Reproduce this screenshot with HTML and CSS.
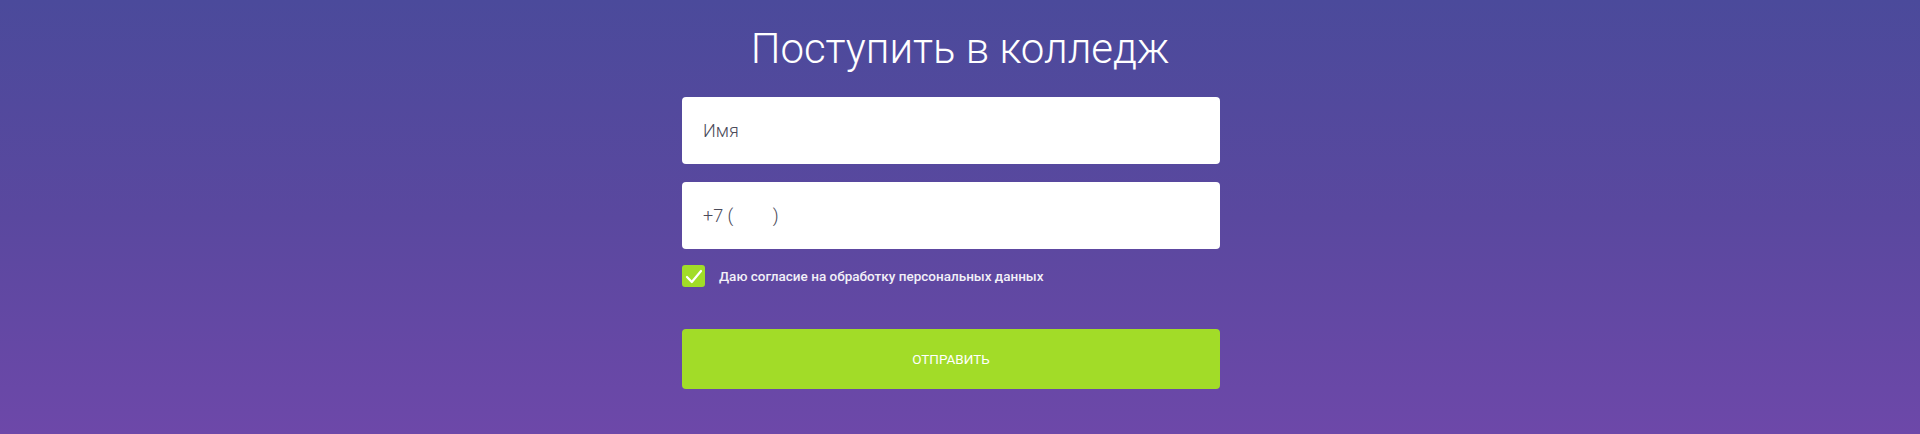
FILE: index.html
```html
<!DOCTYPE html>
<html lang="ru">
<head>
    <meta charset="UTF-8">
    <meta name="viewport" content="width=device-width, initial-scale=1.0">
    <title>Поступить в колледж</title>
    <link rel="stylesheet" href="styles.css">
</head>
<body>
    <section class="apply">
        <h1 class="apply-title">Поступить в колледж</h1>

        <form class="apply-form" onsubmit="return false">
            <input class="field" type="text" name="name" placeholder="Имя">
            <input class="field field-phone" type="tel" name="phone" placeholder="+7 (         )">

            <label class="agree">
                <input type="checkbox" name="agree" checked>
                <span class="agree-box">
                    <svg width="18" height="15" viewBox="0 0 18 15">
                        <path d="M2 8 L6.8 13 L16 2" fill="none" stroke="#fff" stroke-width="2.2" stroke-linecap="round" stroke-linejoin="round"/>
                    </svg>
                </span>
                <span class="agree-text">Даю согласие на обработку персональных данных</span>
            </label>

            <button class="submit-btn" type="submit">Отправить</button>
        </form>
    </section>
</body>
</html>
```

FILE: styles.css
```css
html, body { margin: 0; padding: 0; }
body {
    height: 434px;
    overflow: hidden;
    font-family: Roboto, "Liberation Sans", Arial, sans-serif;
    background: linear-gradient(180deg, #4b4a9b 0%, #5a489f 50%, #6d48a9 100%);
    color: #fff;
}
.apply { padding-top: 24px; }
.apply-title {
    margin: 0;
    font-size: 42px;
    line-height: 50px;
    font-weight: 300;
    text-align: center;
    color: #fff;
}
.apply-form {
    width: 538px;
    padding-right: 18px;
    margin: 23px auto 0;
    display: flex;
    flex-direction: column;
}
.field {
    box-sizing: border-box;
    height: 67px;
    border: none;
    border-radius: 4px;
    padding: 0 21px;
    font-family: Roboto, "Liberation Sans", Arial, sans-serif;
    font-size: 18px;
    font-weight: 300;
    color: #4b4b5a;
    background: #fff;
    outline: none;
}
.field::placeholder { color: #4b4b5a; opacity: 1; white-space: pre; }
.field-phone { margin-top: 18px; }

.agree {
    display: flex;
    align-items: center;
    margin-top: 16px;
    cursor: pointer;
}
.agree input { display: none; }
.agree-box {
    width: 23px;
    height: 22px;
    border-radius: 3px;
    background: #a1dc28;
    display: flex;
    align-items: center;
    justify-content: center;
    flex-shrink: 0;
}
.agree-text {
    margin-left: 14px;
    font-size: 13.5px;
    font-weight: 500;
    color: #f2f0f8;
}

.submit-btn {
    margin-top: 42px;
    height: 60px;
    border: none;
    border-radius: 4px;
    background: #a2dc28;
    color: #fff;
    font-family: Roboto, "Liberation Sans", Arial, sans-serif;
    font-size: 13.5px;
    text-transform: uppercase;
    cursor: pointer;
}
.submit-btn:hover { background: #96cf20; }
```
